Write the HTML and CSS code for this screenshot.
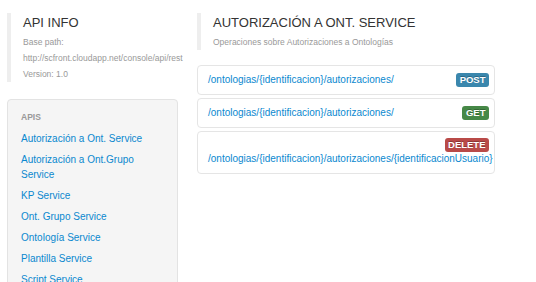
FILE: index.html
```html
<!DOCTYPE html>
<html>
<head>
    <title>API INFO</title>
    <link rel="stylesheet" href="styles.css">
</head>
<body>
    <div class="page">
        <div class="side">
            <div class="info">
                <h1>API INFO</h1>
                <p>Base path:</p>
                <p>http://scfront.cloudapp.net/console/api/rest</p>
                <p>Version: 1.0</p>
            </div>
            <div class="well">
                <ul class="nav-list">
                    <li class="nav-header">APIS</li>
                    <li><a href="#">Autorización a Ont. Service</a></li>
                    <li><a href="#">Autorización a Ont.Grupo Service</a></li>
                    <li><a href="#">KP Service</a></li>
                    <li><a href="#">Ont. Grupo Service</a></li>
                    <li><a href="#">Ontología Service</a></li>
                    <li><a href="#">Plantilla Service</a></li>
                    <li><a href="#">Script Service</a></li>
                </ul>
            </div>
        </div>
        <div class="main">
            <div class="info">
                <h1>AUTORIZACIÓN A ONT. SERVICE</h1>
                <p>Operaciones sobre Autorizaciones a Ontologías</p>
            </div>
            <div class="op">
                <span class="badge post">POST</span>
                <a href="#" class="path">/ontologias/{identificacion}/autorizaciones/</a>
            </div>
            <div class="op">
                <span class="badge get">GET</span>
                <a href="#" class="path">/ontologias/{identificacion}/autorizaciones/</a>
            </div>
            <div class="op">
                <span class="badge delete">DELETE</span>
                <a href="#" class="path">/ontologias/{identificacion}/autorizaciones/{identificacionUsuario}</a>
            </div>
        </div>
    </div>
</body>
</html>
```

FILE: styles.css
```css
body {
    margin: 0;
    background-color: #ffffff;
    color: #333333;
    font-family: "Liberation Sans", Arial, sans-serif;
}
a {
    color: #0a88cf;
    text-decoration: none;
}
.page {
    display: flex;
    gap: 19px;
    padding: 13px 0 0 7px;
}
.side {
    width: 171px;
    flex: none;
}
.main {
    width: 298px;
    flex: none;
}
.info {
    border-left: 4px solid #eeeeee;
    padding: 2px 0 0 12px;
    margin-bottom: 15px;
}
.info h1 {
    margin: 0 0 3px;
    font-size: 13px;
    line-height: 16px;
    font-weight: normal;
    color: #333333;
}
.info p {
    margin: 0;
    font-size: 8.5px;
    line-height: 16px;
    color: #999999;
}
.side .info {
    margin-bottom: 17px;
}
.well {
    background-color: #f5f5f5;
    border: 1px solid #e3e3e3;
    border-radius: 4px;
    padding: 7px 12px 10px 13px;
}
.nav-list {
    list-style: none;
    margin: 0;
    padding: 0;
}
.nav-list li {
    padding: 3px 0;
    font-size: 10px;
    line-height: 15px;
}
.nav-list .nav-header {
    font-size: 8.5px;
    font-weight: bold;
    color: #999999;
    text-transform: uppercase;
}
.op {
    border: 1px solid #e5e5e5;
    border-radius: 4px;
    padding: 7px 5px 7px 10px;
    margin-bottom: 3px;
    font-size: 10px;
    line-height: 14px;
}
.op:last-child {
    padding-top: 6px;
}
.path {
    white-space: nowrap;
}
.badge {
    float: right;
    color: #ffffff;
    font-size: 9.5px;
    font-weight: bold;
    line-height: 14px;
    padding: 0 3.5px;
    border-radius: 3px;
    text-shadow: 0 -1px 0 rgba(0, 0, 0, 0.25);
}
.post { background-color: #3a87ad; }
.get { background-color: #468847; }
.delete { background-color: #b94a48; }
```
